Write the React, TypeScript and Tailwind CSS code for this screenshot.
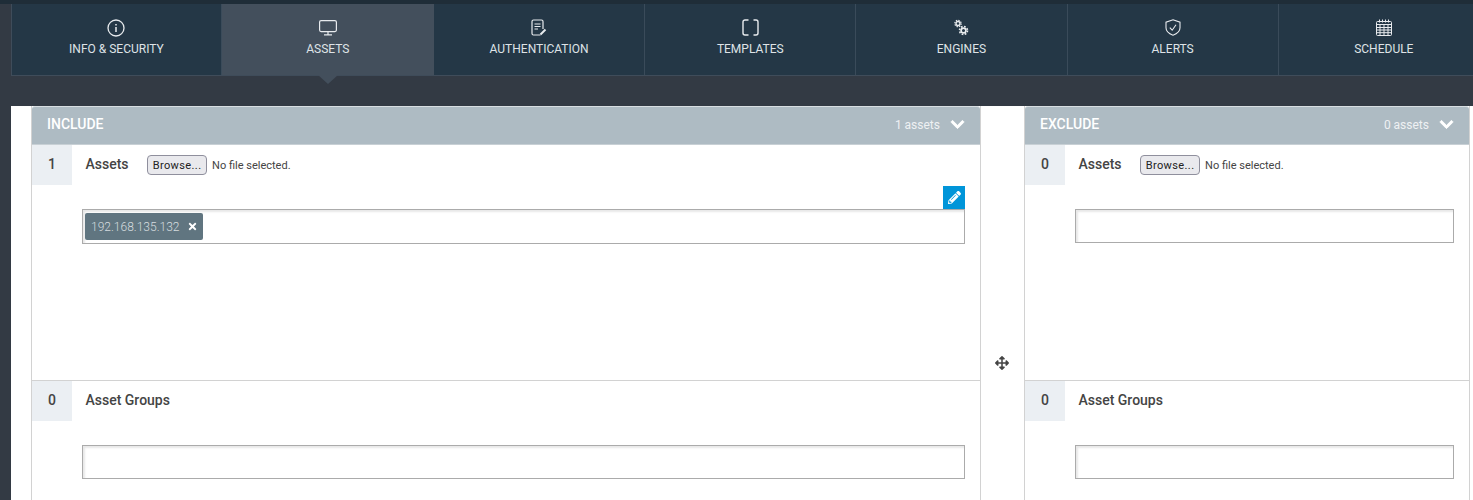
import { FaArrowsAlt, FaChevronDown, FaPencilAlt, FaTimes } from "react-icons/fa"

function InfoIcon() {
  return (
    <svg width="18" height="18" viewBox="0 0 18 18" fill="none" stroke="currentColor" strokeWidth="1.3">
      <circle cx="9" cy="9" r="8" />
      <path d="M9 8v5M9 5v1.6" strokeWidth="1.5" />
    </svg>
  )
}

function MonitorIcon() {
  return (
    <svg width="18" height="16" viewBox="0 0 18 16" fill="none" stroke="currentColor" strokeWidth="1.2">
      <rect x="0.6" y="0.6" width="16.8" height="11" rx="1.5" />
      <path d="M9 11.6v3M5 14.9h8" />
    </svg>
  )
}

function AuthIcon() {
  return (
    <svg width="16" height="17" viewBox="0 0 16 17" fill="none" stroke="currentColor" strokeWidth="1.2">
      <path d="M9.5 16H2.5A1.5 1.5 0 0 1 1 14.5v-12A1.5 1.5 0 0 1 2.5 1h8A1.5 1.5 0 0 1 12 2.5V10" />
      <path d="M3.5 5h6M3.5 7.5h6M3.5 10h3.5" />
      <path d="M9.5 15.5l5-5" strokeWidth="2" />
    </svg>
  )
}

function TemplatesIcon() {
  return (
    <svg width="17" height="17" viewBox="0 0 17 17" fill="none" stroke="currentColor" strokeWidth="1.4">
      <path d="M6.5 1H3A2 2 0 0 0 1 3v11a2 2 0 0 0 2 2h3.5M11.5 1H14a2 2 0 0 1 2 2v11a2 2 0 0 1-2 2h-2.5" />
    </svg>
  )
}

function EnginesIcon() {
  return (
    <svg width="15" height="17" viewBox="0 0 15 17" fill="none" stroke="currentColor">
      <circle cx="4" cy="4.5" r="2" strokeWidth="1.4" />
      <circle cx="4" cy="4.5" r="3.2" strokeWidth="1.2" strokeDasharray="1.4 1.1" />
      <circle cx="9.5" cy="11.5" r="2.4" strokeWidth="1.7" />
      <circle cx="9.5" cy="11.5" r="4" strokeWidth="1.6" strokeDasharray="1.7 1.45" />
    </svg>
  )
}

function ShieldIcon() {
  return (
    <svg width="16" height="17" viewBox="0 0 16 17" fill="none" stroke="currentColor" strokeWidth="1.1">
      <path d="M8 0.8l7 2.4v5.6c0 3.6-3 6-7 7.4-4-1.4-7-3.8-7-7.4V3.2z" />
      <path d="M4.8 8.6l2.4 2.6 3.8-5.4" />
    </svg>
  )
}

function CalendarIcon() {
  return (
    <svg width="16" height="17" viewBox="0 0 16 17" fill="none" stroke="currentColor" strokeWidth="1">
      <rect x="0.5" y="2.5" width="15" height="14" rx="1" />
      <path d="M0.5 5.5h15M0.5 8.5h15M0.5 11h15M0.5 13.7h15" />
      <path d="M4 5.5v11M8 5.5v11M12 5.5v11" />
      <path d="M3.5 0.5v3M6.5 0.5v3M9.5 0.5v3M12.5 0.5v3" />
    </svg>
  )
}

const tabs = [
  { label: "INFO & SECURITY", icon: <InfoIcon /> },
  { label: "ASSETS", icon: <MonitorIcon />, active: true },
  { label: "AUTHENTICATION", icon: <AuthIcon /> },
  { label: "TEMPLATES", icon: <TemplatesIcon /> },
  { label: "ENGINES", icon: <EnginesIcon /> },
  { label: "ALERTS", icon: <ShieldIcon /> },
  { label: "SCHEDULE", icon: <CalendarIcon /> },
]

function Tab({ label, icon, active }: { label: string, icon: React.ReactNode, active?: boolean }) {
  return (
    <div className={`relative flex h-full shrink-0 flex-col items-center border-r border-[#3a4b5a] pt-[14px] first:w-[209.8px] ${active ? "w-[212.2px] border-r-0 bg-[#434f5c]" : "w-[211.2px]"}`}>
      <div className="flex h-[19px] items-center justify-center text-[#e8ebee]">{icon}</div>
      <span className="mt-[4px] text-[12px] leading-[16px] text-[#dfe3e7]">{label}</span>
      {active && (
        <div className="absolute top-full left-1/2 -ml-[10px] h-0 w-0 border-x-[10px] border-t-[9px] border-x-transparent border-t-[#434f5c]" />
      )}
    </div>
  )
}

function FileRow({ count, title, file }: { count: number, title: string, file?: boolean }) {
  return (
    <div className="flex h-10">
      <div className="flex w-10 items-center justify-center bg-[#ebeff3] pb-[2px] text-[14px] font-medium text-[#444]">{count}</div>
      <div className="ml-[13.5px] flex items-center pb-[2px] text-[14px] font-medium text-[#444]">{title}</div>
      {file && (
        <div className="ml-[18.5px] flex items-center">
          <div className="flex h-5 w-[60px] items-center justify-center rounded-[4px] border border-[#8f8f9d] bg-[#e9e9ed] pt-[2px] text-[11px] tracking-[0.4px] text-[#222]">Browse...</div>
          <span className="ml-[5px] pt-[2px] text-[11px] text-[#444]">No file selected.</span>
        </div>
      )}
    </div>
  )
}

function Panel({ name, assets, count, className, inputPad }: { name: string, assets: string, count: number, className: string, inputPad: string }) {
  return (
    <div className={`border-x border-[#d2d2d2] ${className}`}>
      <div className="flex h-[38px] items-center justify-between rounded-t-[3px] border-t border-[#d8dee2] bg-[#aebbc3] pr-[15px] pb-[2px] pl-[15px] text-white">
        <span className="text-[14px] font-medium">{name}</span>
        <div className="flex items-center">
          <span className="text-[12px] text-[#eef1f3]">{assets}</span>
          <FaChevronDown size={15} stroke="currentColor" strokeWidth={30} className="ml-[10px]" />
        </div>
      </div>
      <div className="h-[1px] bg-[#c8d0d5]" />
      <div className="h-[236px] border-b border-[#d2d2d2]">
        <FileRow count={count} title="Assets" file />
        <div className={`relative mt-[24px] ${inputPad}`}>
          {count > 0 && (
            <div className="absolute -top-[23px] right-0 flex h-[23px] w-[22px] items-center justify-center bg-[#0095d9] text-white">
              <FaPencilAlt size={13} />
            </div>
          )}
          <div className={`flex items-center border border-[#ababab] pl-[2px] shadow-[inset_2px_2px_2px_#e8e8e8] ${count > 0 ? "h-[35px]" : "h-[34px]"}`}>
            {count > 0 && (
              <div className="flex h-[27px] w-[118px] items-center rounded-[2px] bg-[#607580] pl-[6px] text-[12px] font-light text-[#d5dcdf]">
                192.168.135.132
                <FaTimes size={11} className="ml-[7px] text-white" />
              </div>
            )}
          </div>
        </div>
      </div>
      <div className="h-[119px]">
        <FileRow count={0} title="Asset Groups" />
        <div className={`mt-[24px] ${inputPad}`}>
          <div className="h-[34px] border border-[#ababab] shadow-[inset_2px_2px_2px_#e8e8e8]" />
        </div>
      </div>
    </div>
  )
}

export default function App() {
  return (
    <main className="flex h-[500px] flex-col overflow-hidden bg-[#333a44] font-['Roboto',sans-serif]">
      <div className="h-1 bg-[#1f2d38]" />
      <nav className="ml-[11px] flex h-[72px] border-b border-l border-[#3f4c5a] bg-[#243746]">
        {tabs.map((tab) => (
          <Tab key={tab.label} label={tab.label} icon={tab.icon} active={tab.active} />
        ))}
      </nav>
      <section className="mt-[30px] ml-[11px] flex flex-1 bg-white pl-5">
        <Panel name="INCLUDE" assets="1 assets" count={1} className="w-[950px]" inputPad="mr-[15px] ml-[50px]" />
        <div className="flex w-[43px] items-start justify-center pt-[250px] pr-[1px] text-[#444]">
          <FaArrowsAlt size={14} />
        </div>
        <Panel name="EXCLUDE" assets="0 assets" count={0} className="w-[446px]" inputPad="mr-[15px] ml-[50px]" />
      </section>
    </main>
  )
}
